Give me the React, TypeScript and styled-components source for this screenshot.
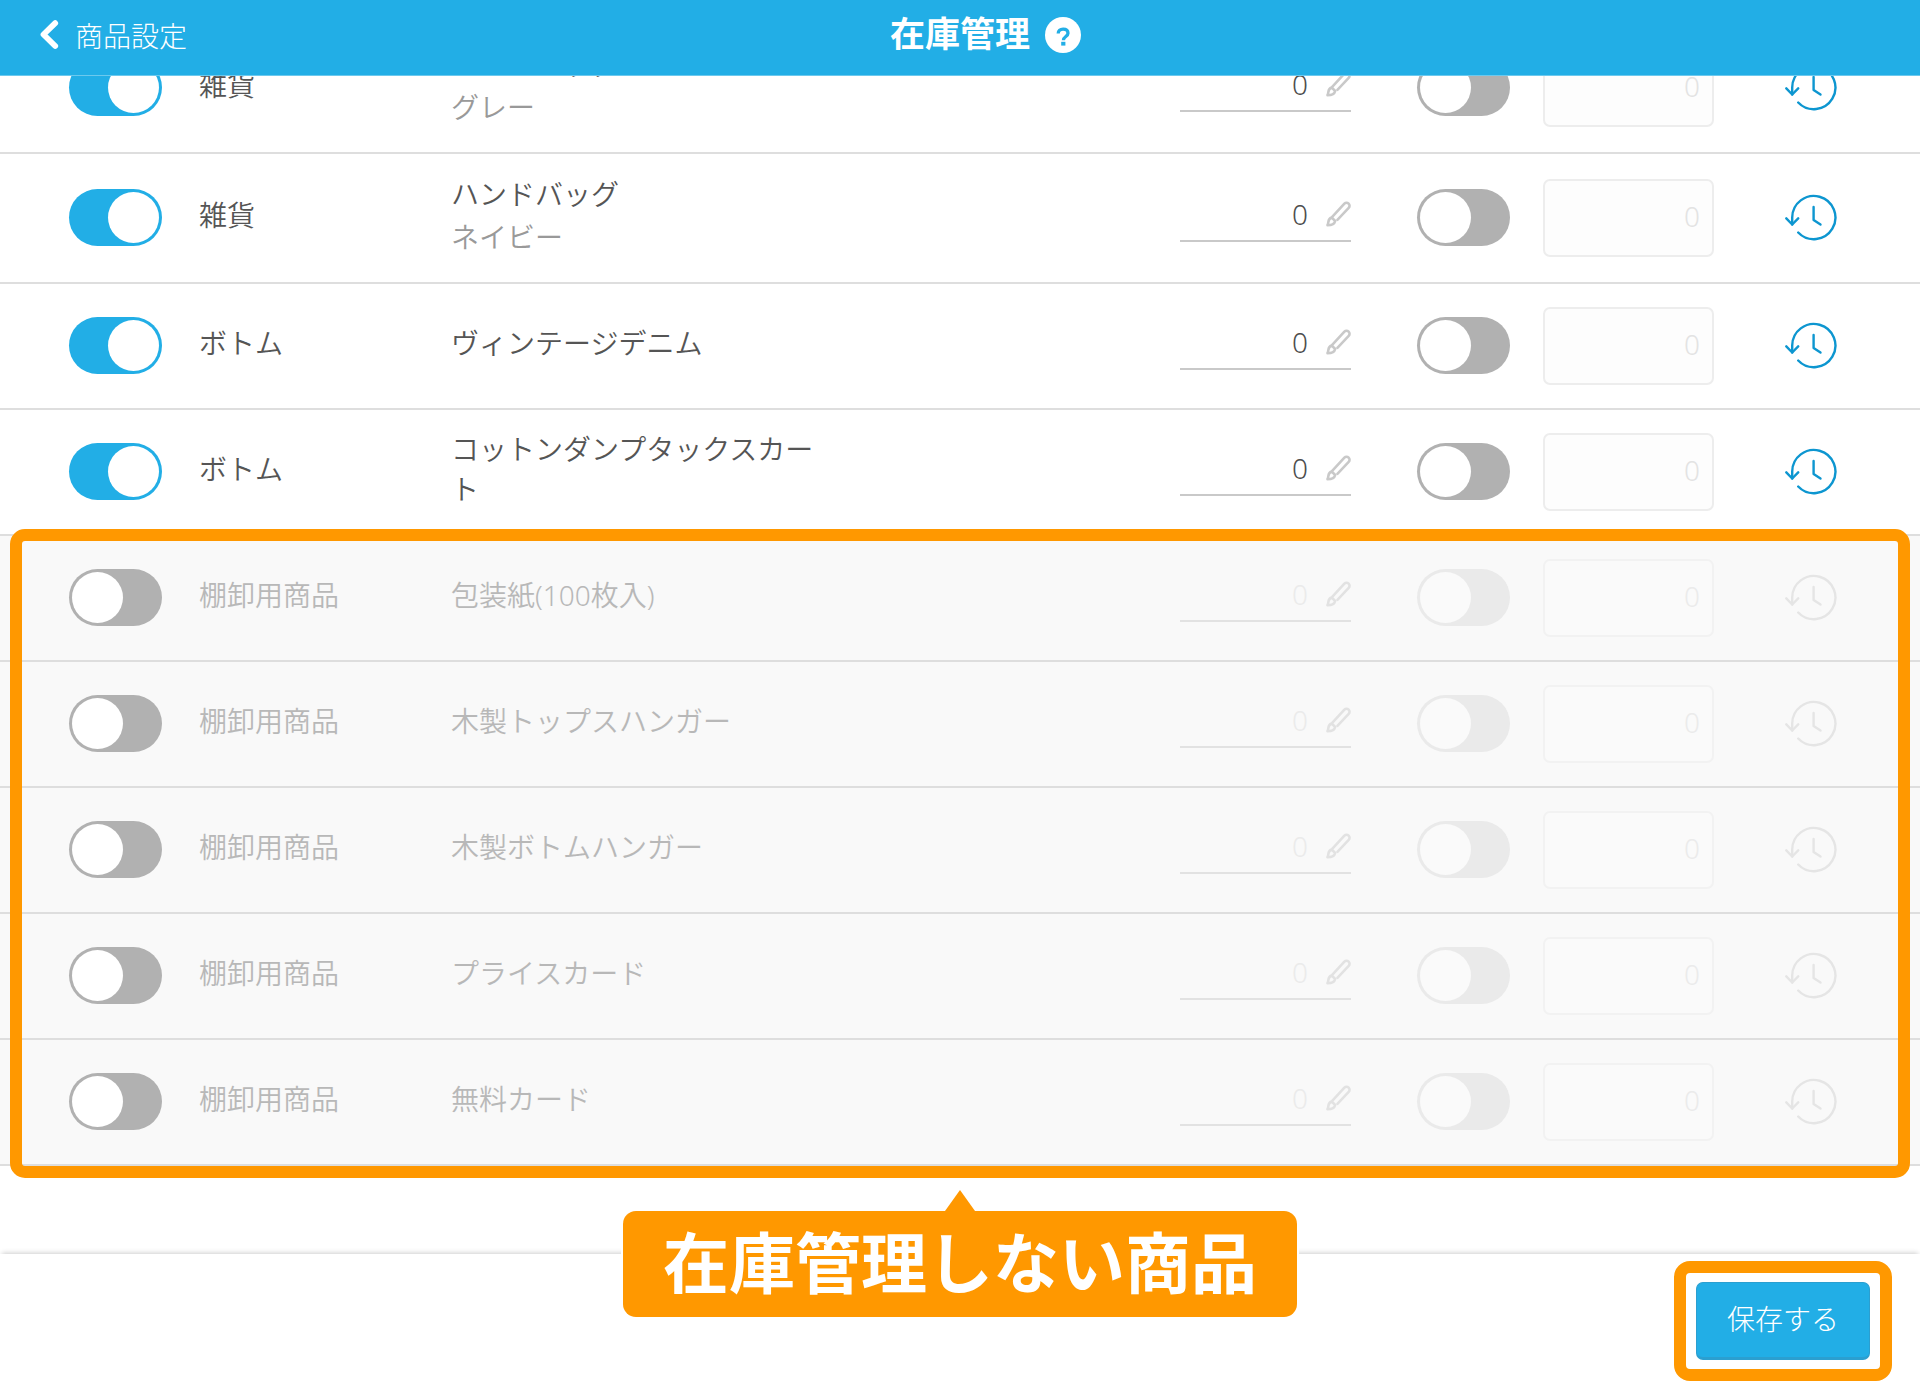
import React from 'react';
import styled, { createGlobalStyle, css } from 'styled-components';

const GlobalStyle = createGlobalStyle`
  *, *::before, *::after { box-sizing: border-box; }
  html, body { margin: 0; padding: 0; background: #fff; }
  body, button, input {
    font-family: "Noto Sans", "Noto Sans CJK JP", sans-serif;
    font-weight: 350;
    font-size: 28px;
    line-height: 40px;
  }
`;

const BLUE = '#22aee6';
const ORANGE = '#ff9800';

const Page = styled.div`
  display: flex;
  flex-direction: column;
  min-height: 100vh;
  color: #555;
`;

const Header = styled.header`
  position: sticky;
  top: 0;
  z-index: 2;
  display: grid;
  grid-template-columns: 1fr auto 1fr;
  align-items: center;
  height: 76px;
  padding: 0 40px 6px;
  color: #fff;
  background: ${BLUE};
  border-bottom: 1px solid #6cc9ee;
`;

const BackLink = styled.a`
  display: flex;
  align-items: center;
  gap: 16px;
  font-weight: 300;
  color: inherit;
  text-decoration: none;
`;

const BackLabel = styled.span`
  padding-top: 2px;
`;

const Title = styled.h1`
  margin: 0;
  padding-bottom: 2px;
  font-size: 35px;
  line-height: 56px;
  font-weight: 700;
`;

const HelpButton = styled.button`
  display: flex;
  width: 36px;
  height: 36px;
  margin-left: 15px;
  padding: 0;
  border: 0;
  background: none;
`;

/* The list is scrolled by part of its first row, which sits under the header. */
const Main = styled.main`
  flex: 1;
  margin-top: -52px;
`;

const ListArea = styled.div`
  position: relative;
  z-index: 1;
`;

const Table = styled.table`
  width: 100%;
  table-layout: fixed;
  border-collapse: separate;
  border-spacing: 0;
`;

const Col = styled.col<{ $width?: number }>`
  width: ${(p) => (p.$width ? `${p.$width}px` : 'auto')};
`;

const Row = styled.tr<{ $tall?: boolean; $muted?: boolean }>`
  height: ${(p) => (p.$tall ? 130 : 126)}px;
  ${(p) =>
    p.$muted &&
    css`
      color: #b8b8b8;
      background: #f9f9f9;
    `}
`;

const Cell = styled.td`
  padding: 0;
  vertical-align: middle;
  border-bottom: 2px solid #dedede;
`;

const FirstCell = styled(Cell)`
  padding-left: 69px;
`;

const TextCell = styled(Cell)`
  padding-bottom: 6px;
`;

const ProductName = styled.div`
  max-width: 380px;
  word-break: break-all;
`;

const Variant = styled.div`
  padding-top: 3px;
  color: #999;
`;

const HighlightedBody = styled.tbody`
  position: relative;

  &::after {
    content: '';
    position: absolute;
    inset: -7px 10px -12px;
    border: 12px solid ${ORANGE};
    border-radius: 15px;
    pointer-events: none;
  }
`;

const Switch = styled.input<{ $faint?: boolean }>`
  appearance: none;
  display: flex;
  width: 93px;
  height: 57px;
  margin: 0 0 2px;
  padding: 3px;
  border-radius: 29px;
  background: ${(p) => (p.$faint ? '#eaeaea' : '#b1b1b1')};

  &::before {
    content: '';
    width: 51px;
    height: 51px;
    border-radius: 50%;
    background: ${(p) => (p.$faint ? '#fafafa' : '#fff')};
  }

  &:checked {
    justify-content: flex-end;
    background: ${BLUE};
  }
`;

const StockField = styled.label<{ $muted?: boolean }>`
  display: flex;
  align-items: center;
  gap: 18px;
  width: 171px;
  height: 48px;
  padding-bottom: 6px;
  color: ${(p) => (p.$muted ? '#e2e2e2' : '#c9c9c9')};
  border-bottom: 2px solid currentColor;
`;

const StockInput = styled.input<{ $muted?: boolean }>`
  flex: 1;
  min-width: 0;
  padding: 0;
  border: 0;
  text-align: right;
  background: none;
  color: ${(p) => (p.$muted ? '#ebebeb' : '#4d4d4d')};
`;

const AlertInput = styled.input<{ $muted?: boolean }>`
  display: block;
  width: 171px;
  height: 78px;
  padding: 0 12px 4px;
  border: 2px solid ${(p) => (p.$muted ? '#f2f2f2' : '#ededed')};
  border-radius: 7px;
  text-align: right;
  color: ${(p) => (p.$muted ? '#ebebeb' : '#e3e3e3')};
  background: ${(p) => (p.$muted ? '#fafafa' : '#fdfdfd')};
`;

const HistoryButton = styled.button<{ $muted?: boolean }>`
  display: flex;
  padding: 0;
  border: 0;
  background: none;
  color: ${(p) => (p.$muted ? '#e5e5e5' : '#0d96d0')};
`;

const Callout = styled.p`
  position: absolute;
  top: calc(100% + 45px);
  left: 50%;
  transform: translateX(-50%);
  margin: 0;
  padding: 0 40px 4px;
  border-radius: 13px;
  box-shadow: 0 0 0 2px #fff;
  white-space: nowrap;
  font-size: 66px;
  line-height: 102px;
  font-weight: 700;
  color: #fff;
  background: ${ORANGE};

  &::before {
    content: '';
    position: absolute;
    bottom: 100%;
    left: 50%;
    margin-left: -15px;
    border: 15px solid transparent;
    border-top-width: 0;
    border-bottom: 21px solid ${ORANGE};
  }
`;

const Footer = styled.footer`
  display: flex;
  justify-content: flex-end;
  align-items: flex-start;
  height: 146px;
  padding: 7px 28px;
  background: #fff;
  box-shadow: 0 -3px 5px -2px rgba(0, 0, 0, 0.2);
`;

const SaveFrame = styled.div`
  padding: 9px 10px;
  border: 12px solid ${ORANGE};
  border-radius: 16px;
`;

const SaveButton = styled.button`
  display: block;
  width: 174px;
  height: 78px;
  padding: 0 0 2px;
  border: 1px solid #2b9fd0;
  border-bottom-width: 3px;
  border-radius: 7px;
  font-weight: 300;
  color: #fff;
  background: ${BLUE};
`;

const ChevronIcon = () => (
  <svg width="19" height="30" viewBox="0 0 19 30" fill="none" aria-hidden="true">
    <path d="M15.2 3.2 L3.5 14.5 L15.2 26" stroke="currentColor" strokeWidth="5.8" strokeLinecap="round" strokeLinejoin="round" />
  </svg>
);

const HelpIcon = () => (
  <svg width="36" height="36" viewBox="0 0 36 36" fill="none" aria-hidden="true">
    <circle cx="18" cy="18" r="18" fill="#fff" />
    <path d="M13.2 16.4c0-2.6 1.9-4.2 4.9-4.2s4.9 1.6 4.9 4.1c0 3.2-4.6 3.3-4.6 7" stroke={BLUE} strokeWidth="3.3" />
    <rect x="16.2" y="24.8" width="4.2" height="3.8" fill={BLUE} />
  </svg>
);

const PencilIcon = () => (
  <svg width="25" height="26" viewBox="0 0 25 26" fill="none" stroke="currentColor" strokeWidth="2.6" strokeLinecap="round" strokeLinejoin="round" aria-hidden="true">
    <path d="M6.2 15.8 L18.4 2.7 a2.9 2.9 0 0 1 4.3 4.2 L11.4 18.8" />
    <path d="M5.8 16.6 l3.4 3.4 c-.6 2.6-3.6 4.2-7.7 4.2 c.6-1.2 .7-2 .9-3.4 c.3-2.3 1.5-3.9 3.4-4.2 z" />
  </svg>
);

const HistoryIcon = () => (
  <svg width="52" height="48" viewBox="0 0 52 48" fill="none" stroke="currentColor" strokeWidth="2.4" strokeLinecap="round" strokeLinejoin="round" aria-hidden="true">
    <path d="M7.2 30.5 V23.5 a21.6 21.6 0 1 1 6 15" />
    <path d="M1.3 24.3 L7.2 30.5 L13.2 24.3" />
    <path d="M28.6 13 V26 L35.5 30.5" />
  </svg>
);

type Item = { category: string; name: string; variant?: string };

const managed: Item[] = [
  { category: '雑貨', name: 'ハンドバッグ', variant: 'グレー' },
  { category: '雑貨', name: 'ハンドバッグ', variant: 'ネイビー' },
  { category: 'ボトム', name: 'ヴィンテージデニム' },
  { category: 'ボトム', name: 'コットンダンプタックスカート' },
];

const unmanaged: Item[] = [
  { category: '棚卸用商品', name: '包装紙(100枚入)' },
  { category: '棚卸用商品', name: '木製トップスハンガー' },
  { category: '棚卸用商品', name: '木製ボトムハンガー' },
  { category: '棚卸用商品', name: 'プライスカード' },
  { category: '棚卸用商品', name: '無料カード' },
];

const ItemRow = ({ item, muted = false }: { item: Item; muted?: boolean }) => (
  <Row $tall={Boolean(item.variant)} $muted={muted}>
    <FirstCell>
      <Switch type="checkbox" role="switch" aria-label="在庫管理" defaultChecked={!muted} />
    </FirstCell>
    <TextCell>{item.category}</TextCell>
    <TextCell>
      <ProductName>{item.name}</ProductName>
      {item.variant && <Variant>{item.variant}</Variant>}
    </TextCell>
    <Cell>
      <StockField $muted={muted}>
        <StockInput type="text" inputMode="numeric" aria-label="在庫数" defaultValue="0" disabled={muted} $muted={muted} />
        <PencilIcon />
      </StockField>
    </Cell>
    <Cell>
      <Switch type="checkbox" role="switch" aria-label="アラート" disabled={muted} $faint={muted} />
    </Cell>
    <Cell>
      <AlertInput type="text" inputMode="numeric" aria-label="アラート数" defaultValue="0" disabled $muted={muted} />
    </Cell>
    <Cell>
      <HistoryButton type="button" aria-label="履歴" disabled={muted} $muted={muted}>
        <HistoryIcon />
      </HistoryButton>
    </Cell>
  </Row>
);

export default function App() {
  return (
    <Page lang="ja">
      <GlobalStyle />
      <Header>
        <BackLink href="#settings">
          <ChevronIcon />
          <BackLabel>商品設定</BackLabel>
        </BackLink>
        <Title>在庫管理</Title>
        <HelpButton type="button" aria-label="ヘルプ">
          <HelpIcon />
        </HelpButton>
      </Header>
      <Main>
        <ListArea>
          <Table>
            <colgroup>
              <Col $width={199} />
              <Col $width={252} />
              <Col />
              <Col $width={237} />
              <Col $width={126} />
              <Col $width={242} />
              <Col $width={135} />
            </colgroup>
            <tbody>
              {managed.map((item) => (
                <ItemRow key={item.name + (item.variant ?? '')} item={item} />
              ))}
            </tbody>
            <HighlightedBody>
              {unmanaged.map((item) => (
                <ItemRow key={item.name} item={item} muted />
              ))}
            </HighlightedBody>
          </Table>
          <Callout>在庫管理しない商品</Callout>
        </ListArea>
      </Main>
      <Footer>
        <SaveFrame>
          <SaveButton type="button">保存する</SaveButton>
        </SaveFrame>
      </Footer>
    </Page>
  );
}
